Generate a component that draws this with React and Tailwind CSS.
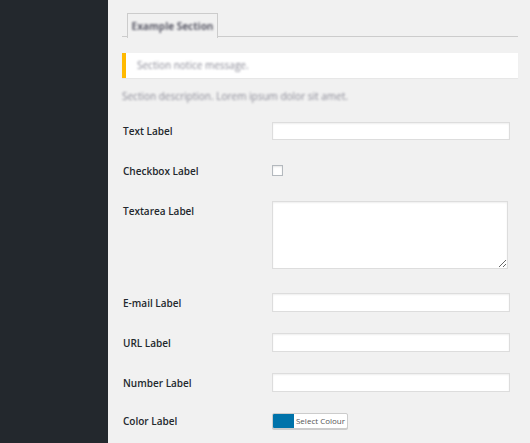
import React from 'react';

const font = { fontFamily: '"Open Sans", "Noto Sans", sans-serif' };

const Row = ({ label, top, h, children, align = 'center' }) => (
  <div className={`flex ${align === 'start' ? 'items-start' : 'items-center'} ${top} ${h}`}>
    <div className={`w-[149px] shrink-0 text-[10px] leading-[14px] font-semibold text-[#23282d] ${align === 'start' ? 'pt-[3px]' : ''}`}>
      {label}
    </div>
    {children}
  </div>
);

const TextInput = ({ type = 'text', h = 'h-[19px]' }) => (
  <input
    type={type}
    className={`block w-[238px] ${h} bg-white border border-[#dddddd] shadow-[inset_0_1px_2px_rgba(0,0,0,0.07)] outline-none`}
  />
);

export default function App() {
  return (
    <div className="flex w-[530px] h-[443px] overflow-hidden bg-[#f1f1f1]" style={font}>
      <div className="w-[108px] shrink-0 bg-[#23282d]"></div>

      <div className="flex-1 pl-[14px] pr-[12px] pt-[13px]">
        {/* tabs */}
        <div className="flex h-[24px] border-b border-[#cccccc] pl-[5px]">
          <div className="w-[91px] h-[25px] border border-b-0 border-[#cccccc] bg-[#f1f1f1] flex items-center justify-center">
            <span className="text-[10px] font-bold text-[#5d5d6a] blur-[1.2px]">Example Section</span>
          </div>
        </div>

        {/* notice */}
        <div className="mt-[16px] h-[25px] bg-white border-l-4 border-[#ffb900] shadow-[0_1px_1px_rgba(0,0,0,0.04)] flex items-center pl-[11px]">
          <span className="text-[10px] text-[#8a8a96] blur-[1.2px]">Section notice message.</span>
        </div>

        {/* description */}
        <p className="mt-[11px] text-[10px] leading-[14px] text-[#8a8a96] blur-[1.2px]">
          Section description. Lorem ipsum dolor sit amet.
        </p>

        {/* form */}
        <div className="flex flex-col pl-[1px]">
          <Row label="Text Label" top="mt-[19px]" h="h-[18px]">
            <TextInput h="h-[18px]" />
          </Row>
          <Row label="Checkbox Label" top="mt-[25px]" h="h-[11px]">
            <span className="block w-[11px] h-[11px] bg-white border border-[#b4b9be] shadow-[inset_0_1px_2px_rgba(0,0,0,0.1)]"></span>
          </Row>
          <Row label="Textarea Label" top="mt-[25px]" h="h-[68px]" align="start">
            <textarea className="block w-[236px] h-[68px] bg-white border border-[#dddddd] shadow-[inset_0_1px_2px_rgba(0,0,0,0.07)] outline-none resize"></textarea>
          </Row>
          <Row label="E-mail Label" top="mt-[24px]" h="h-[19px]">
            <TextInput type="email" />
          </Row>
          <Row label="URL Label" top="mt-[21px]" h="h-[19px]">
            <TextInput type="url" />
          </Row>
          <Row label="Number Label" top="mt-[21px]" h="h-[19px]">
            <TextInput type="number" />
          </Row>
          <Row label="Color Label" top="mt-[21px]" h="h-[16px]">
            <button className="flex h-[16px] w-[76px] rounded-[2px] border border-[#cccccc] bg-white shadow-[0_1px_0_#cccccc] overflow-hidden p-0">
              <span className="w-[21px] h-full shrink-0 bg-[#0073aa]"></span>
              <span className="flex-1 flex items-center justify-center whitespace-nowrap text-[8px] text-[#555555] leading-none">
                Select Colour
              </span>
            </button>
          </Row>
        </div>
      </div>
    </div>
  );
}
